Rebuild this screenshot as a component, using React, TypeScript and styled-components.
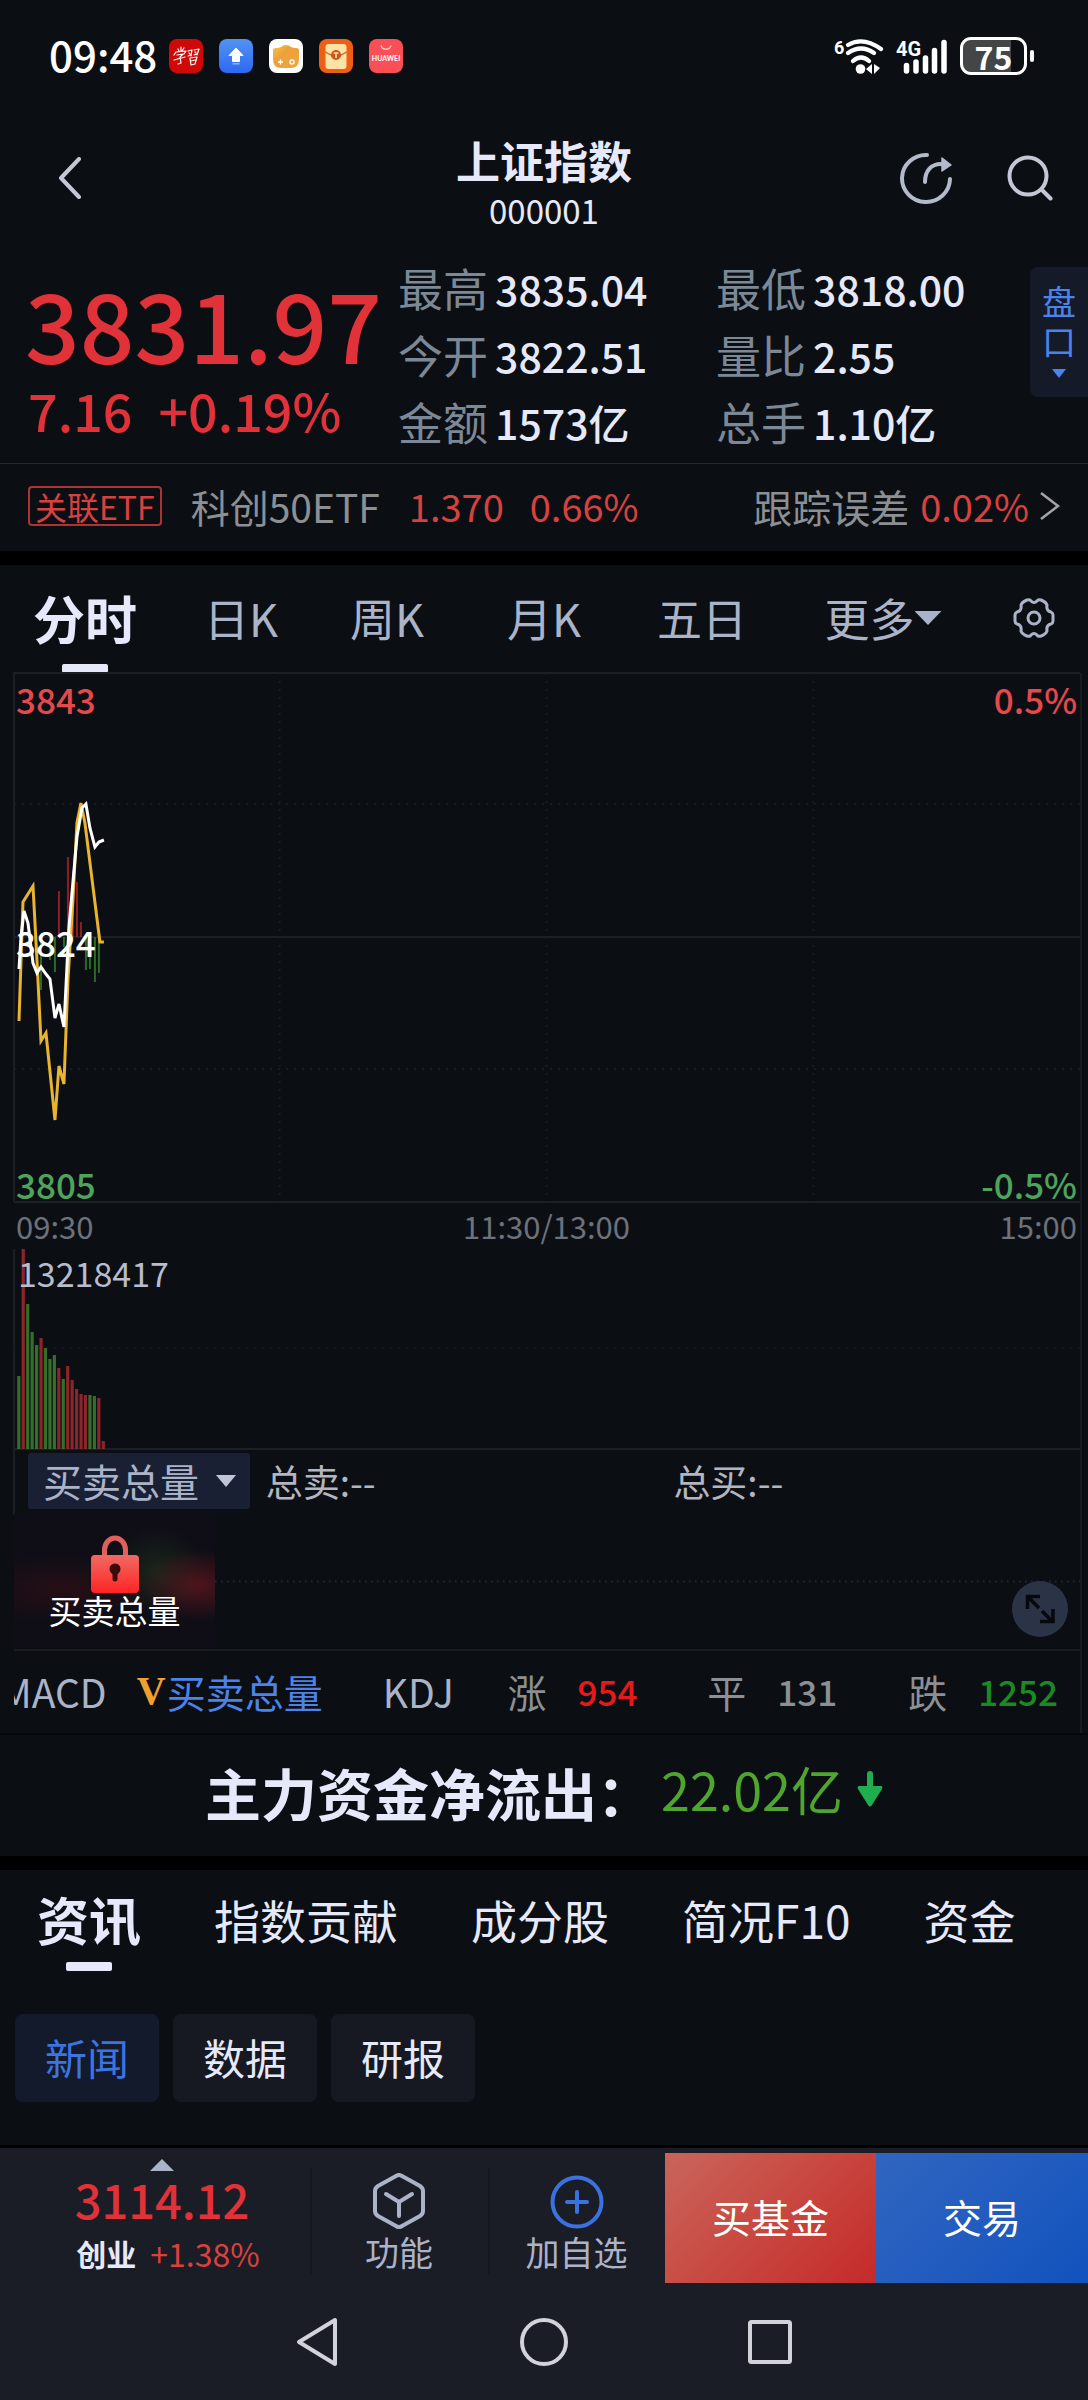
import React from "react";
import styled, { createGlobalStyle, css } from "styled-components";

const color = {
  page: "#0b0f14",
  gap: "#000000",
  bar: "#1b1d26",
  text: "#e6e9fa",
  soft: "#abb3c8",
  label: "#7d8896",
  muted: "#8c8f93",
  red: "#e03238",
  softRed: "#d9413f",
  green: "#4fa45c",
  blue: "#4c83ea",
};

const Global = createGlobalStyle`
  *, *::before, *::after { box-sizing: border-box; }
  body {
    margin: 0;
    background: ${color.bar};
    color: ${color.text};
    font-family: "Noto Sans CJK SC", "Noto Sans", sans-serif;
  }
  button, select { font: inherit; color: inherit; background: none; border: 0; padding: 0; margin: 0; }
  a { color: inherit; text-decoration: none; }
  h1, h2, p, dl, dt, dd { margin: 0; font-size: inherit; font-weight: inherit; }
  svg { display: block; flex: none; }
`;

const Screen = styled.div`
  display: flex;
  flex-direction: column;
  background: ${color.page};
  overflow: hidden;
`;

const Spacer = styled.div`
  height: 14px;
  background: ${color.gap};
`;

/* ---------- status bar ---------- */

const StatusBar = styled.div`
  display: flex;
  align-items: center;
  justify-content: space-between;
  height: 112px;
  padding: 0 61px 0 49px;
`;

const StatusSide = styled.div<{ $gap: number }>`
  display: flex;
  align-items: center;
  gap: ${(p) => p.$gap}px;
`;

const Clock = styled.time`
  font-size: 42px;
  line-height: 44px;
  padding-bottom: 4px;
  font-weight: 500;
  color: #fff;
  margin-right: -4px;
`;

const Battery = styled.span`
  position: relative;
  display: flex;
  align-items: center;
  justify-content: center;
  width: 67px;
  height: 38px;
  border: 3px solid #fff;
  border-radius: 11px;
  background: linear-gradient(90deg, #444547 78%, #0b0f14 78%);
  color: #fff;
  font-size: 32px;
  line-height: 32px;
  font-weight: 700;
  &::after {
    content: "";
    position: absolute;
    right: -10px;
    width: 4px;
    height: 12px;
    border-radius: 2px;
    background: #fff;
  }
`;

const AppIcons = () => (
  <>
    <svg width="34" height="34" viewBox="0 0 34 34" role="img" aria-label="学习">
      <rect width="34" height="34" rx="8" fill="#cf0808" />
      <g fill="none" stroke="#fff" strokeWidth="1.2" strokeLinecap="round" strokeLinejoin="round">
        <path d="M9 10l1 2M12 8v4M15 9l-2 3M5 16l2-3 10-1-2 3M8 16l6-1-3 3M5 21l11-3M11 18l1 6-3 1" />
        <path d="M19 12l4-1-1 6M20 14l1 1M19 17l3-1M25 11l5-1-2 6M26 13l1 1M25 16l3-1M21 19l7-1-2 7-4 1-1-6M22 22l4-1" />
      </g>
    </svg>
    <svg width="34" height="34" viewBox="0 0 34 34">
      <defs>
        <linearGradient id="upload" x1="0" y1="0" x2="0" y2="1">
          <stop offset="0" stopColor="#5294f2" />
          <stop offset="1" stopColor="#2d68f2" />
        </linearGradient>
      </defs>
      <rect width="34" height="34" rx="8" fill="url(#upload)" />
      <path d="M17 9l7 7.500h-3.500v6h-7v-6H10z" fill="#fff" stroke="#fff" strokeLinejoin="round" />
      <rect x="13.500" y="24" width="7" height="1.500" fill="#8db6fa" />
    </svg>
    <svg width="34" height="34" viewBox="0 0 34 34">
      <defs>
        <linearGradient id="pad" x1="0" y1="0" x2="1" y2="1">
          <stop offset="0" stopColor="#f7c34a" />
          <stop offset="0.400" stopColor="#eda03c" />
          <stop offset="1" stopColor="#f2a63c" />
        </linearGradient>
      </defs>
      <rect width="34" height="34" rx="8" fill="#fff" />
      <path d="M4 11q0-2 3-2 3 0 5-1 2-2 5-2t5 2q2 1 5 1 3 0 3 2v9q0 9-8 9H12q-8 0-8-9z" fill="url(#pad)" />
      <path d="M11.500 20.500v5M9 23h5" stroke="#fff" strokeWidth="1.400" />
      <circle cx="23" cy="23" r="2" fill="none" stroke="#fff" strokeWidth="1.400" />
    </svg>
    <svg width="34" height="34" viewBox="0 0 34 34">
      <rect width="34" height="34" rx="8" fill="#ee5f14" />
      <rect x="6.500" y="5" width="21" height="25" rx="3" fill="#ffe2a6" />
      <path d="M6.500 13l7 4M27.500 13l-7 4" stroke="#c9621c" strokeWidth="1.400" />
      <circle cx="17" cy="16" r="5" fill="#c9551f" />
      <path d="M14.500 14h5M17 14v5" stroke="#ffe2a6" strokeWidth="1.600" />
    </svg>
    <svg width="34" height="34" viewBox="0 0 34 34">
      <rect width="34" height="34" rx="8" fill="#fb4f57" />
      <path d="M12 6.500a5.200 5.200 0 0 0 10 0" fill="none" stroke="#ffc4c0" strokeWidth="1.400" />
      <text x="17" y="22" textAnchor="middle" fill="#fff" fontFamily="Lato, sans-serif" fontWeight="700" fontSize="7">
        HUAWEI
      </text>
    </svg>
  </>
);

const WifiIcon = () => (
  <svg width="50" height="38" viewBox="0 0 50 38" fill="none" stroke="#fff" strokeWidth="4.200" strokeLinecap="round">
    <text x="0" y="17" fill="#fff" stroke="none" fontFamily="Roboto, sans-serif" fontSize="18" fontWeight="700">
      6
    </text>
    <path d="M14 8q15-9 33 4M14 16q13-9 26 0M19 24q8-7 16 0" />
    <circle cx="26.500" cy="32" r="4.800" fill="#fff" stroke="none" />
    <path d="M38 27v10l-6-5zM40 27v10l6-6z" fill="#fff" stroke="none" />
  </svg>
);

const SignalIcon = () => (
  <svg width="52" height="38" viewBox="0 0 52 38" stroke="#fff" strokeWidth="5.500" strokeLinecap="round">
    <text x="0" y="19" fill="#fff" stroke="none" fontFamily="Roboto, sans-serif" fontSize="20" fontWeight="700">
      4G
    </text>
    <path d="M10.500 28.500V34M20 25v9M29.500 21v13M38.500 13.500V34M48 5.500V34" />
  </svg>
);

/* ---------- title bar ---------- */

const TitleBar = styled.header`
  display: grid;
  grid-template-columns: 1fr auto 1fr;
  align-items: center;
  height: 132px;
  padding: 0 32px;
`;

const TitleText = styled.div`
  display: flex;
  flex-direction: column;
  align-items: center;
  padding-top: 8px;
`;

const Title = styled.h1`
  font-size: 44px;
  line-height: 56px;
  font-weight: 700;
`;

const Code = styled.p`
  font-size: 33px;
  line-height: 44px;
`;

const IconButton = styled.button`
  display: flex;
  align-items: center;
  justify-content: center;
  width: 52px;
  height: 60px;
`;

const BackButton = styled(IconButton)`
  width: 36px;
  margin-left: 20px;
`;

const TitleActions = styled.div`
  display: flex;
  justify-content: flex-end;
  gap: 52px;
`;

/* ---------- quote ---------- */

const Quote = styled.section`
  display: flex;
  height: 220px;
  padding-left: 25px;
  border-bottom: 1px solid #24282d;
`;

const PriceColumn = styled.div`
  display: flex;
  flex-direction: column;
  flex: none;
  width: 372px;
  padding-top: 24px;
  color: ${color.red};
`;

const Price = styled.p`
  font-size: 96px;
  line-height: 110px;
  font-weight: 500;
`;

const Change = styled.p`
  display: flex;
  gap: 26px;
  font-size: 52px;
  line-height: 64px;
  font-weight: 500;
  padding-left: 3px;
`;

const Stats = styled.dl`
  display: grid;
  grid-template-columns: 317fr 313fr;
  grid-auto-rows: 67px;
  flex: 1;
  padding: 10px 0 0 1px;
`;

const Stat = styled.div`
  display: flex;
  align-items: center;
  gap: 7px;
  white-space: nowrap;
  dt {
    font-size: 45px;
    line-height: 64px;
    color: ${color.label};
  }
  dd {
    font-size: 41px;
    line-height: 64px;
    font-weight: 500;
  }
`;

const BookButton = styled.button`
  display: flex;
  flex-direction: column;
  align-items: center;
  flex: none;
  width: 58px;
  height: 130px;
  margin-top: 23px;
  padding-top: 14px;
  border-radius: 8px 0 0 8px;
  background: #151a28;
  color: ${color.blue};
  font-size: 34px;
  line-height: 40px;
`;

const Triangle = styled.span<{ $w: number; $h: number; $up?: boolean; $color: string }>`
  width: ${(p) => p.$w}px;
  height: ${(p) => p.$h}px;
  background: ${(p) => p.$color};
  clip-path: ${(p) => (p.$up ? "polygon(50% 0, 100% 100%, 0 100%)" : "polygon(0 0, 100% 0, 50% 100%)")};
`;

const BookTriangle = styled(Triangle)`
  margin-top: 8px;
`;

/* ---------- related ETF ---------- */

const EtfRow = styled.a`
  display: flex;
  align-items: center;
  height: 87px;
  padding: 0 27px 3px 28px;
  font-size: 39px;
  line-height: 56px;
  color: ${color.muted};
`;

const EtfTag = styled.span`
  padding: 0 5px;
  margin-right: 29px;
  border: 2px solid #ad3433;
  border-radius: 4px;
  font-size: 32px;
  line-height: 36px;
  color: ${color.softRed};
`;

const EtfNumber = styled.span<{ $gap: number }>`
  margin-left: ${(p) => p.$gap}px;
  font-size: 38px;
  color: ${color.softRed};
`;

const Push = styled.span`
  margin-left: auto;
`;

const EtfChevron = styled.svg`
  margin-left: 10px;
`;

/* ---------- tabs ---------- */

const activeMark = css`
  &::after {
    content: "";
    position: absolute;
    left: 50%;
    bottom: 0;
    width: 46px;
    height: 9px;
    margin-left: -23px;
    border-radius: 2px;
    background: ${color.text};
  }
`;

const PeriodTabs = styled.nav`
  display: grid;
  grid-template-columns: 170fr 142fr 150fr 164fr 152fr 210fr 92fr;
  height: 108px;
  padding-right: 8px;
`;

const PeriodTab = styled.button<{ $active?: boolean }>`
  position: relative;
  display: flex;
  align-items: center;
  justify-content: center;
  min-width: 0;
  padding-bottom: 2px;
  white-space: nowrap;
  font-size: ${(p) => (p.$active ? 52 : 45)}px;
  line-height: 64px;
  font-weight: ${(p) => (p.$active ? 700 : 400)};
  color: ${(p) => (p.$active ? color.text : color.soft)};
  ${(p) => p.$active && activeMark}
`;

/* ---------- charts ---------- */

const Charts = styled.section`
  margin: 0 6px 0 14px;
  border-right: 2px solid #181c21;
`;

const PlotBox = styled.div<{ $height: number }>`
  position: relative;
  height: ${(p) => p.$height}px;
`;

const Plot = styled.svg`
  position: absolute;
  inset: 0;
  width: 100%;
  height: 100%;
  overflow: visible;
`;

const AxisLabels = styled.div`
  position: relative;
  display: flex;
  flex-direction: column;
  justify-content: space-between;
  height: 100%;
  padding: 10px 3px 2px 2px;
  font-size: 35px;
  line-height: 32px;
  font-weight: 500;
`;

const AxisRow = styled.div<{ $color: string }>`
  display: flex;
  justify-content: space-between;
  color: ${(p) => p.$color};
`;

const TimeAxis = styled.div`
  display: grid;
  grid-template-columns: 1fr auto 1fr;
  height: 47px;
  padding: 0 3px 0 2px;
  font-size: 31px;
  line-height: 48px;
  color: #6d717b;
  span:last-child {
    text-align: right;
  }
`;

const VolumeLabel = styled.span`
  position: relative;
  display: block;
  padding: 4px 0 0 4px;
  font-size: 34px;
  line-height: 40px;
  color: #b9bccb;
`;

const grid = { stroke: "#1c2026", strokeWidth: 2, vectorEffect: "non-scaling-stroke" as const };

const averageLine =
  "5,348 9,229 19,213 23,287 27,368 32,360 41,447 45,393 50,411 54,307 59,227 63,150 67,130 71,150 86,269 90,269";
const priceLine =
  "5,296 7,264 10,238 14,250 19,290 23,300 27,294 32,301 36,306 41,345 45,331 50,354 55,254 63,164 68,135 72,131 76,155 81,174 85,169 90,167";

const momentum: Array<[number, number]> = [
  [27, 53], [36, 23], [41, 35], [45, -46], [50, 10], [54, -80], [59, -66], [63, -55],
  [67, -15], [72, 33], [76, 32], [81, 45], [85, 36],
];

const IntradayPlot = () => (
  <Plot viewBox="0 0 1067 529" preserveAspectRatio="none" fill="none" role="img" aria-label="分时">
    <path d="M0 529V0H1067M0 529H1067M0 264H1067" {...grid} />
    <path d="M0 131H1067M0 396H1067M266 0V529M533 0V529M800 0V529" {...grid} stroke="#181c22" strokeDasharray="2 6" />
    {momentum.map(([x, v]) => (
      <path
        key={x}
        d={`M${x} 264v${v}`}
        stroke={v < 0 ? "#8f1d22" : "#2a6a26"}
        strokeWidth="2"
        vectorEffect="non-scaling-stroke"
      />
    ))}
    <polyline points={averageLine} stroke="#e9b42f" strokeWidth="3" vectorEffect="non-scaling-stroke" />
    <polyline points={priceLine} stroke="#fff" strokeWidth="3" vectorEffect="non-scaling-stroke" />
  </Plot>
);

const volumes: Array<[number, "up" | "down"]> = [
  [73, "down"], [200, "up"], [145, "down"], [117, "down"], [104, "down"], [111, "up"], [101, "down"],
  [90, "down"], [94, "down"], [81, "up"], [70, "down"], [83, "up"], [69, "up"], [60, "up"], [55, "up"],
  [54, "up"], [54, "down"], [53, "down"], [51, "up"], [8, "up"],
];

const VolumePlot = () => (
  <Plot viewBox="0 0 1067 200" preserveAspectRatio="none" fill="none" role="img" aria-label="成交量">
    <path d="M0 0V266" {...grid} />
    <path d="M0 200H1067" {...grid} />
    <path d="M0 99H1067" {...grid} stroke="#13171c" strokeDasharray="2 6" />
    {volumes.map(([v, kind], i) => (
      <rect
        key={i}
        x={3.2 + i * 4.45}
        y={200 - v}
        width="3.200"
        height={v}
        fill={kind === "up" ? "#8c2529" : "#356e2b"}
      />
    ))}
  </Plot>
);

const OrderBar = styled.div`
  position: relative;
  display: grid;
  grid-template-columns: 252fr 408fr 407fr;
  align-items: center;
  height: 64px;
  font-size: 37px;
  line-height: 56px;
  color: #b3b5c0;
`;

const SelectBox = styled.label`
  position: relative;
  display: flex;
  align-items: center;
  justify-content: space-between;
  width: 222px;
  height: 56px;
  margin-left: 14px;
  border-radius: 3px;
  background: #1a2034;
  select {
    appearance: none;
    width: 100%;
    height: 56px;
    padding: 0 0 3px 15px;
    font-size: 39px;
    line-height: 52px;
    color: ${color.soft};
  }
`;

const SelectArrow = styled(Triangle)`
  position: absolute;
  right: 14px;
  pointer-events: none;
`;

const OrderPlot = styled.div`
  position: relative;
  display: flex;
  align-items: center;
  justify-content: space-between;
  height: 138px;
  padding-right: 12px;
  border-bottom: 2px solid #181c21;
`;

const LockCard = styled.button`
  position: relative;
  display: flex;
  flex-direction: column;
  align-items: center;
  width: 201px;
  height: 136px;
  padding-top: 22px;
  background:
    radial-gradient(ellipse 56px 36px at 184px 72px, rgba(120, 24, 32, 0.600), transparent),
    radial-gradient(ellipse 48px 44px at 142px 58px, rgba(34, 58, 30, 0.500), transparent),
    radial-gradient(ellipse 110px 34px at 50px 76px, rgba(74, 14, 24, 0.400), transparent),
    #0f0e16;
  color: #fff;
  font-size: 33px;
  line-height: 34px;
`;

const ExpandButton = styled.button`
  position: relative;
  display: flex;
  align-items: center;
  justify-content: center;
  width: 56px;
  height: 56px;
  margin-top: 56px;
  border-radius: 50%;
  background: #2b3346;
`;

const IndicatorRow = styled.div`
  display: grid;
  grid-template-columns: 494fr 200fr 201fr 172fr;
  align-items: center;
  height: 82px;
  padding-bottom: 2px;
  font-size: 39px;
  line-height: 56px;
  color: ${color.soft};
`;

const IndicatorList = styled.div`
  display: flex;
  align-items: center;
  overflow: hidden;
`;

const Indicator = styled.button<{ $gap: number; $active?: boolean }>`
  flex: none;
  margin-left: ${(p) => p.$gap}px;
  color: ${(p) => (p.$active ? color.blue : "inherit")};
`;

const VipMark = styled.span`
  margin-left: 30px;
  width: 30px;
  font-family: "Liberation Serif", serif;
  font-weight: 700;
  font-size: 40px;
  line-height: 40px;
  color: #f0a030;
`;

const Breadth = styled.div`
  display: flex;
  align-items: center;
  gap: 31px;
  color: ${color.muted};
`;

const BreadthCount = styled.strong<{ $color: string }>`
  font-size: 35px;
  font-weight: 500;
  color: ${(p) => p.$color};
`;

/* ---------- capital flow ---------- */

const Flow = styled.section`
  display: flex;
  align-items: center;
  justify-content: center;
  gap: 8px;
  height: 123px;
  border-top: 2px solid #06080b;
  padding-bottom: 8px;
  font-size: 56px;
  line-height: 72px;
  font-weight: 700;
`;

const FlowValue = styled.span`
  display: flex;
  align-items: center;
  gap: 14px;
  padding-bottom: 6px;
  font-size: 52px;
  font-weight: 400;
  color: #50a52f;
`;

/* ---------- news ---------- */

const News = styled.section`
  height: 275px;
`;

const NewsTabs = styled.nav`
  display: flex;
  gap: 73px;
  height: 101px;
  padding-left: 37px;
`;

const NewsTab = styled.button<{ $active?: boolean }>`
  position: relative;
  flex: none;
  padding-bottom: 4px;
  font-size: ${(p) => (p.$active ? 52 : 46)}px;
  line-height: 64px;
  font-weight: ${(p) => (p.$active ? 700 : 400)};
  ${(p) => p.$active && activeMark}
`;

const Chips = styled.div`
  display: flex;
  gap: 14px;
  padding: 43px 15px 0;
`;

const Chip = styled.button<{ $active?: boolean }>`
  width: 144px;
  height: 88px;
  padding-bottom: 2px;
  border-radius: 8px;
  font-size: 42px;
  line-height: 64px;
  background: ${(p) => (p.$active ? "#121a2b" : "#161922")};
  color: ${(p) => (p.$active ? "#3c74e2" : color.text)};
`;

/* ---------- bottom bar ---------- */

const BottomBar = styled.footer`
  display: grid;
  grid-template-columns: 310fr 178fr 177fr 211fr 212fr;
  height: 138px;
  padding-top: 5px;
  border-top: 3px solid #000;
  background: ${color.bar};
`;

const IndexTicker = styled.button`
  display: flex;
  flex-direction: column;
  align-items: center;
  padding: 6px 0 0 14px;
`;

const TickerPrice = styled.span`
  font-size: 47px;
  line-height: 56px;
  font-weight: 500;
  color: ${color.red};
`;

const TickerLine = styled.span`
  display: flex;
  align-items: center;
  gap: 14px;
  padding-left: 12px;
  font-size: 32px;
  line-height: 52px;
  color: ${color.softRed};
  b {
    font-size: 30px;
    color: ${color.text};
  }
`;

const Tool = styled.button`
  position: relative;
  display: flex;
  flex-direction: column;
  align-items: center;
  padding-top: 20px;
  font-size: 34px;
  line-height: 46px;
  color: ${color.soft};
  &::before {
    content: "";
    position: absolute;
    left: 0;
    top: 15px;
    bottom: 8px;
    width: 2px;
    background: #15171e;
  }
`;

const Trade = styled.button<{ $kind: "fund" | "stock" }>`
  padding-bottom: 4px;
  font-size: 39px;
  line-height: 56px;
  color: #fff;
  background: ${(p) =>
    p.$kind === "fund"
      ? "linear-gradient(135deg, #c9655c, #c84840 50%, #c52a2a)"
      : "linear-gradient(135deg, #3066c0, #225cbf 50%, #1152bd)"};
`;

const SystemNav = styled.nav`
  display: flex;
  justify-content: center;
  gap: 166px;
  padding: 29px 0 28px;
  background: ${color.bar};
`;

const SystemButton = styled.button`
  display: flex;
  align-items: center;
  justify-content: center;
  width: 60px;
  height: 60px;
`;

export default function App() {
  return (
    <Screen>
      <Global />
      <StatusBar>
        <StatusSide $gap={16}>
          <Clock>09:48</Clock>
          <AppIcons />
        </StatusSide>
        <StatusSide $gap={12}>
          <WifiIcon />
          <SignalIcon />
          <Battery>75</Battery>
        </StatusSide>
      </StatusBar>

      <TitleBar>
        <BackButton aria-label="返回">
          <svg width="24" height="42" viewBox="0 0 24 42" fill="none" stroke="#c4c8d6" strokeWidth="4" strokeLinecap="round" strokeLinejoin="round">
            <path d="M21 2L3 21l18 19" />
          </svg>
        </BackButton>
        <TitleText>
          <Title>上证指数</Title>
          <Code>000001</Code>
        </TitleText>
        <TitleActions>
          <IconButton aria-label="分享">
            <svg width="52" height="52" viewBox="0 0 52 52" fill="none" stroke="#b3bacb" strokeWidth="4" strokeLinecap="round">
              <path d="M27 3A24 23.500 0 1 0 50 27" />
              <path d="M25 30C25 19 31 12 41 12" />
              <path d="M42 6l9 7-9 6z" fill="#b3bacb" strokeWidth="1.500" strokeLinejoin="round" />
            </svg>
          </IconButton>
          <IconButton aria-label="搜索">
            <svg width="46" height="46" viewBox="0 0 46 46" fill="none" stroke="#c4c8d4" strokeWidth="4" strokeLinecap="round">
              <circle cx="21" cy="21" r="18.500" />
              <path d="M35 35l8.500 8.500" />
            </svg>
          </IconButton>
        </TitleActions>
      </TitleBar>

      <Quote>
        <PriceColumn>
          <Price>3831.97</Price>
          <Change>
            <span>7.16</span>
            <span>+0.19%</span>
          </Change>
        </PriceColumn>
        <Stats>
          <Stat><dt>最高</dt><dd>3835.04</dd></Stat>
          <Stat><dt>最低</dt><dd>3818.00</dd></Stat>
          <Stat><dt>今开</dt><dd>3822.51</dd></Stat>
          <Stat><dt>量比</dt><dd>2.55</dd></Stat>
          <Stat><dt>金额</dt><dd>1573亿</dd></Stat>
          <Stat><dt>总手</dt><dd>1.10亿</dd></Stat>
        </Stats>
        <BookButton>
          <span>盘</span>
          <span>口</span>
          <BookTriangle $w={14} $h={9} $color={color.blue} />
        </BookButton>
      </Quote>

      <EtfRow href="#etf">
        <EtfTag>关联ETF</EtfTag>
        <span>科创50ETF</span>
        <EtfNumber $gap={29}>1.370</EtfNumber>
        <EtfNumber $gap={26}>0.66%</EtfNumber>
        <Push>跟踪误差</Push>
        <EtfNumber $gap={11}>0.02%</EtfNumber>
        <EtfChevron width="22" height="30" viewBox="0 0 22 30" fill="none" stroke="#a3a5aa" strokeWidth="2.500">
          <path d="M2 2l17 13L2 28" />
        </EtfChevron>
      </EtfRow>

      <Spacer />

      <PeriodTabs>
        <PeriodTab $active>分时</PeriodTab>
        <PeriodTab>日K</PeriodTab>
        <PeriodTab>周K</PeriodTab>
        <PeriodTab>月K</PeriodTab>
        <PeriodTab>五日</PeriodTab>
        <PeriodTab>
          更多
          <Triangle $w={27} $h={14} $color={color.soft} />
        </PeriodTab>
        <PeriodTab aria-label="设置">
          <svg width="42" height="40" viewBox="0 0 42 40" fill="none" stroke={color.soft} strokeWidth="3" strokeLinejoin="round">
            <path d="M14 2q3-1 4 1 3 3 6 0 1-2 4-1 5 2 6 5-1 6 4 7 2 1 2 3v6q0 2-2 3-5 1-4 7-1 3-6 5-3 1-4-1-3-3-6 0-1 2-4 1-5-2-6-5 1-6-4-7-2-1-2-3v-6q0-2 2-3 5-1 4-7 1-3 6-5z" />
            <circle cx="21" cy="20" r="6" />
          </svg>
        </PeriodTab>
      </PeriodTabs>

      <Charts>
        <PlotBox $height={529}>
          <IntradayPlot />
          <AxisLabels>
            <AxisRow $color="#e5484d"><span>3843</span><span>0.5%</span></AxisRow>
            <AxisRow $color="#ffffff"><span>3824</span></AxisRow>
            <AxisRow $color={color.green}><span>3805</span><span>-0.5%</span></AxisRow>
          </AxisLabels>
        </PlotBox>
        <TimeAxis>
          <span>09:30</span>
          <span>11:30/13:00</span>
          <span>15:00</span>
        </TimeAxis>
        <PlotBox $height={200}>
          <VolumePlot />
          <VolumeLabel>13218417</VolumeLabel>
        </PlotBox>
        <OrderBar>
          <SelectBox>
            <select aria-label="指标" defaultValue="买卖总量">
              <option>买卖总量</option>
            </select>
            <SelectArrow $w={20} $h={12} $color="#c0c6d6" />
          </SelectBox>
          <span>总卖:--</span>
          <span>总买:--</span>
        </OrderBar>
        <OrderPlot>
          <Plot viewBox="0 0 1067 137" preserveAspectRatio="none">
            <path d="M201 69H1067" {...grid} stroke="#22262b" strokeDasharray="2 4" />
          </Plot>
          <LockCard>
            <svg width="48" height="58" viewBox="0 0 48 58">
              <defs>
                <linearGradient id="lock" x1="0" y1="0" x2="0" y2="1">
                  <stop offset="0" stopColor="#f06a62" />
                  <stop offset="1" stopColor="#ff2424" />
                </linearGradient>
              </defs>
              <path d="M13.500 22V15a10.500 12 0 0 1 21 0v7" fill="none" stroke="#e0605c" strokeWidth="5" />
              <rect y="20" width="48" height="38" rx="4" fill="url(#lock)" />
              <circle cx="24" cy="34" r="5.500" fill="#3a0a0c" />
              <path d="M24 35v9" stroke="#3a0a0c" strokeWidth="5" strokeLinecap="round" />
            </svg>
            <span>买卖总量</span>
          </LockCard>
          <ExpandButton aria-label="展开">
            <svg width="30" height="30" viewBox="0 0 30 30" fill="none" stroke="#07090d" strokeWidth="3.500">
              <path d="M14 14L3 3M2.500 15V2.500H15M17 17l10 10M28 15v12.500H15" />
            </svg>
          </ExpandButton>
        </OrderPlot>
        <IndicatorRow>
          <IndicatorList>
            <Indicator $gap={-14}>MACD</Indicator>
            <VipMark>V</VipMark>
            <Indicator $gap={0} $active>买卖总量</Indicator>
            <Indicator $gap={60}>KDJ</Indicator>
          </IndicatorList>
          <Breadth>涨<BreadthCount $color="#e8191c">954</BreadthCount></Breadth>
          <Breadth>平<BreadthCount $color={color.muted}>131</BreadthCount></Breadth>
          <Breadth>跌<BreadthCount $color="#1c8a22">1252</BreadthCount></Breadth>
        </IndicatorRow>
      </Charts>

      <Flow>
        <h2>主力资金净流出：</h2>
        <FlowValue>
          22.02亿
          <svg width="26" height="36" viewBox="0 0 26 36" fill="#20ad4f">
            <path d="M13 3v16" stroke="#20ad4f" strokeWidth="6" strokeLinecap="round" />
            <path d="M2 15h22q2 0 1 3L15 34q-2 3-4 0L1 18q-1-3 1-3z" />
          </svg>
        </FlowValue>
      </Flow>

      <Spacer />

      <News>
        <NewsTabs>
          <NewsTab $active>资讯</NewsTab>
          <NewsTab>指数贡献</NewsTab>
          <NewsTab>成分股</NewsTab>
          <NewsTab>简况F10</NewsTab>
          <NewsTab>资金</NewsTab>
        </NewsTabs>
        <Chips>
          <Chip $active>新闻</Chip>
          <Chip>数据</Chip>
          <Chip>研报</Chip>
        </Chips>
      </News>

      <BottomBar>
        <IndexTicker>
          <Triangle $w={24} $h={12} $up $color={color.soft} />
          <TickerPrice>3114.12</TickerPrice>
          <TickerLine><b>创业</b>+1.38%</TickerLine>
        </IndexTicker>
        <Tool>
          <svg width="54" height="56" viewBox="0 0 54 56" fill="none" stroke={color.soft} strokeWidth="4" strokeLinecap="round" strokeLinejoin="round">
            <path d="M24 3q3-2 6 0l18 10q3 2 3 5v20q0 3-3 5L30 53q-3 2-6 0L6 43q-3-2-3-5V18q0-3 3-5z" />
            <path d="M14 21l13 8 13-8M27 29v14" />
          </svg>
          功能
        </Tool>
        <Tool>
          <svg width="54" height="56" viewBox="0 0 54 56" fill="none" stroke="#3a72e0" strokeWidth="4" strokeLinecap="round">
            <circle cx="27" cy="29" r="24.500" />
            <path d="M17 29h20M27 19v20" />
          </svg>
          加自选
        </Tool>
        <Trade $kind="fund">买基金</Trade>
        <Trade $kind="stock">交易</Trade>
      </BottomBar>

      <SystemNav>
        <SystemButton aria-label="后退">
          <svg width="44" height="52" viewBox="0 0 44 52" fill="none" stroke="#d2d3d8" strokeWidth="4" strokeLinejoin="round">
            <path d="M39 4v44L3 26z" />
          </svg>
        </SystemButton>
        <SystemButton aria-label="主屏幕">
          <svg width="50" height="50" viewBox="0 0 50 50" fill="none" stroke="#d2d3d8" strokeWidth="4">
            <circle cx="25" cy="25" r="22" />
          </svg>
        </SystemButton>
        <SystemButton aria-label="最近任务">
          <svg width="44" height="44" viewBox="0 0 44 44" fill="none" stroke="#d2d3d8" strokeWidth="4">
            <rect x="2" y="2" width="40" height="40" rx="1.500" />
          </svg>
        </SystemButton>
      </SystemNav>
    </Screen>
  );
}
